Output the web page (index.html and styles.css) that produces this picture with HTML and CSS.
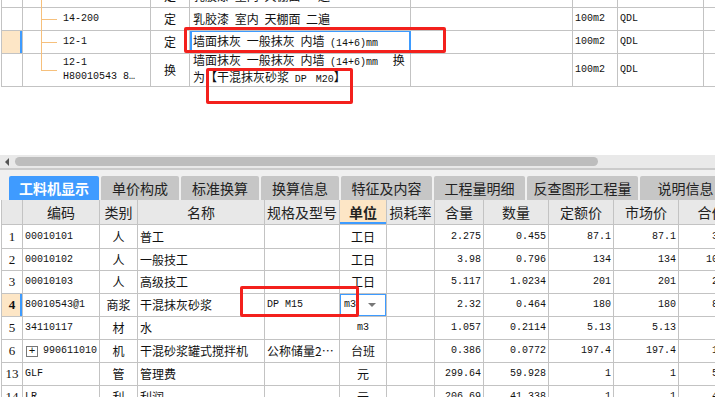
FILE: index.html
```html
<!DOCTYPE html>
<html lang="zh-CN">
<head>
    <meta charset="UTF-8">
    <title>工料机显示</title>
    <link rel="stylesheet" href="styles.css">
</head>
<body>
    <div class="upper">
        <div class="grid top-grid">
            <!-- row cut off at the top -->
            <div></div>
            <div class="code tree"></div>
            <div class="ctr">定</div>
            <div class="desc"><span>乳胶漆 室内 天棚面 一遍</span></div>
            <div></div>
            <div class="m">100m2</div>
            <div class="m">QDL</div>
            <div></div>

            <div></div>
            <div class="code tree"><span class="m">14-200</span></div>
            <div class="ctr">定</div>
            <div class="desc"><span>乳胶漆 室内 天棚面 二遍</span></div>
            <div></div>
            <div class="m">100m2</div>
            <div class="m">QDL</div>
            <div></div>

            <div class="rowsel"></div>
            <div class="code tree"><span class="m">12-1</span></div>
            <div class="ctr">定</div>
            <div class="desc editing"><span>墙面抹灰 一般抹灰 内墙 <span class="m">(14+6)mm</span></span></div>
            <div></div>
            <div class="m">100m2</div>
            <div class="m">QDL</div>
            <div></div>

            <div></div>
            <div class="code tree last"><span class="m">12-1<br>H80010543 8…</span></div>
            <div class="ctr">换</div>
            <div class="desc"><span>墙面抹灰 一般抹灰 内墙 <span class="m">(14+6)mm&nbsp;</span> 换<br>为【干混抹灰砂浆 <span class="m">DP M20</span>】</span></div>
            <div></div>
            <div class="m">100m2</div>
            <div class="m">QDL</div>
            <div></div>
        </div>
    </div>

    <div class="hscroll">
        <span class="arrow-left"></span>
        <span class="thumb"></span>
    </div>

    <div class="tabs">
        <div class="tab active">工料机显示</div>
        <div class="tab w78">单价构成</div>
        <div class="tab w78">标准换算</div>
        <div class="tab w78">换算信息</div>
        <div class="tab w91">特征及内容</div>
        <div class="tab w91">工程量明细</div>
        <div class="tab w111">反查图形工程量</div>
        <div class="tab w91">说明信息</div>
    </div>

    <div class="lower">
        <div class="grid low-grid">
            <div class="hd"></div>
            <div class="hd">编码</div>
            <div class="hd">类别</div>
            <div class="hd">名称</div>
            <div class="hd">规格及型号</div>
            <div class="hd sel">单位</div>
            <div class="hd">损耗率</div>
            <div class="hd">含量</div>
            <div class="hd">数量</div>
            <div class="hd">定额价</div>
            <div class="hd">市场价</div>
            <div class="hd">合价</div>

            <div class="no">1</div><div class="m">00010101</div><div class="ctr">人</div><div>普工</div><div></div><div class="ctr">工日</div><div></div>
            <div class="m r">2.275</div><div class="m r">0.455</div><div class="m r">87.1</div><div class="m r">87.1</div><div class="m r">39.63</div>

            <div class="no">2</div><div class="m">00010102</div><div class="ctr">人</div><div>一般技工</div><div></div><div class="ctr">工日</div><div></div>
            <div class="m r">3.98</div><div class="m r">0.796</div><div class="m r">134</div><div class="m r">134</div><div class="m r">106.66</div>

            <div class="no">3</div><div class="m">00010103</div><div class="ctr">人</div><div>高级技工</div><div></div><div class="ctr">工日</div><div></div>
            <div class="m r">5.117</div><div class="m r">1.0234</div><div class="m r">201</div><div class="m r">201</div><div class="m r">205.7</div>

            <div class="no rowsel">4</div><div class="m">80010543@1</div><div class="ctr">商浆</div><div>干混抹灰砂浆</div><div class="m">DP M15</div>
            <div class="m edit">m3<span class="dd"></span></div><div></div>
            <div class="m r">2.32</div><div class="m r">0.464</div><div class="m r">180</div><div class="m r">180</div><div class="m r">83.52</div>

            <div class="no">5</div><div class="m">34110117</div><div class="ctr">材</div><div>水</div><div></div><div class="m ctr">m3</div><div></div>
            <div class="m r">1.057</div><div class="m r">0.2114</div><div class="m r">5.13</div><div class="m r">5.13</div><div class="m r">1.08</div>

            <div class="no">6</div><div class="m"><span class="expand">+</span>990611010</div><div class="ctr">机</div><div>干混砂浆罐式搅拌机</div><div>公称储量2…</div><div class="ctr">台班</div><div></div>
            <div class="m r">0.386</div><div class="m r">0.0772</div><div class="m r">197.4</div><div class="m r">197.4</div><div class="m r">15.24</div>

            <div class="no">13</div><div class="m">GLF</div><div class="ctr">管</div><div>管理费</div><div></div><div class="ctr">元</div><div></div>
            <div class="m r">299.64</div><div class="m r">59.928</div><div class="m r">1</div><div class="m r">1</div><div class="m r">59.93</div>

            <div class="no">14</div><div class="m">LR</div><div class="ctr">利</div><div>利润</div><div></div><div class="ctr">元</div><div></div>
            <div class="m r">206.69</div><div class="m r">41.338</div><div class="m r">1</div><div class="m r">1</div><div class="m r">41.34</div>
        </div>
    </div>

    <!-- red annotation boxes -->
    <div class="mark mark-1"></div>
    <div class="mark mark-2"></div>
    <div class="mark mark-3"></div>
</body>
</html>
```

FILE: styles.css
```css
body {
    margin: 0;
    width: 715px;
    height: 397px;
    overflow: hidden;
    position: relative;
    background: #fff;
    color: #111;
    font-family: "Noto Sans CJK SC", sans-serif;
    font-size: 12px;
}

/* shared grid look */
.grid {
    display: grid;
    margin-left: 1px;
    border-left: 1px solid #c3c3c3;
}
.grid > div {
    box-sizing: border-box;
    display: flex;
    align-items: center;
    border-right: 1px solid #c3c3c3;
    border-bottom: 1px solid #c3c3c3;
    padding: 0 2px;
    line-height: 14px;
    white-space: nowrap;
    overflow: hidden;
}
.grid > .ctr {
    justify-content: center;
}
.grid > .r {
    justify-content: flex-end;
}
.m {
    font-family: "Liberation Mono", monospace;
    font-size: 10px;
}

/* upper table */
.upper {
    height: 155px;
    overflow: hidden;
}
.top-grid {
    margin-top: -15px;
    grid-template-columns: 21px 128px 39px 221px 162px 45px 86px 50px;
    grid-template-rows: 23px 23px 23px 33px;
}
.top-grid > .code {
    position: relative;
    padding-left: 40px;
    overflow: visible;
}
.tree::before {
    content: "";
    position: absolute;
    left: 18px;
    top: -1px;
    bottom: -1px;
    border-left: 1px solid #f6c07c;
}
.tree::after {
    content: "";
    position: absolute;
    left: 18px;
    top: 11px;
    width: 16px;
    border-top: 1px solid #f6c07c;
}
.tree.last::before {
    bottom: auto;
    height: 17px;
}
.tree.last::after {
    top: 16px;
}
.desc {
    word-spacing: 3px;
}
.top-grid > .desc {
    padding-left: 3px;
}
.top-grid > .editing {
    box-shadow: inset 2px 0 0 #3d9bff, inset 0 0 0 1px #3d9bff;
    border-right-color: #3d9bff;
}
.rowsel {
    background: #fde6c6;
    box-shadow: inset -2px 0 0 #3d9bff;
}

/* horizontal scroll bar */
.hscroll {
    height: 13px;
    background: #e9e9e9;
    border-bottom: 2px solid #cbcbcb;
    display: flex;
    align-items: center;
    padding-left: 5px;
}
.arrow-left {
    width: 0;
    height: 0;
    border-top: 4px solid transparent;
    border-bottom: 4px solid transparent;
    border-right: 4px solid #555;
}
.thumb {
    margin-left: 6px;
    width: 583px;
    height: 9px;
    border-radius: 5px;
    background: #bdbdbd;
}

/* tabs */
.tabs {
    height: 30px;
    box-sizing: border-box;
    padding: 6px 0 0 9px;
    background: #f0f0f0;
    display: flex;
    gap: 2px;
    overflow: hidden;
}
.tab {
    flex: none;
    width: 90px;
    height: 24px;
    border-radius: 2px 2px 0 0;
    background: #c6c6c6;
    color: #222;
    font-size: 14px;
    line-height: 24px;
    text-align: center;
}
.tab.active {
    background: #3f9bff;
    color: #fff;
    font-weight: bold;
}
.w78 { width: 78px; }
.w91 { width: 91px; }
.w111 { width: 111px; }

/* lower table */
.lower {
    height: 197px;
    overflow: hidden;
}
.low-grid {
    width: 746px;
    grid-template-columns: 21px 77px 38px 127px 75px 47px 48px 49px 65px 65px 65px 66px;
    grid-template-rows: 25px 24px 22px 23px 23px 23px 23px 23px 23px;
}
.low-grid > .hd {
    justify-content: center;
    background: #e8e8e8;
    color: #222;
    font-size: 14px;
}
.low-grid > .hd.sel {
    background: #fde6c6;
    font-weight: bold;
    box-shadow: inset 0 -2px 0 #3d9bff;
}
.low-grid > .no {
    justify-content: center;
    padding: 0;
    font-family: "Liberation Serif", serif;
    font-size: 13px;
}
.low-grid > .no.rowsel {
    font-weight: bold;
}
.low-grid > .edit {
    justify-content: space-between;
    padding: 0 10px 0 4px;
    box-shadow: inset 0 0 0 1px #3d9bff;
}
.dd {
    width: 0;
    height: 0;
    border-left: 4px solid transparent;
    border-right: 4px solid transparent;
    border-top: 4px solid #777;
}
.expand {
    display: inline-block;
    box-sizing: border-box;
    width: 12px;
    height: 11px;
    margin: 0 5px 0 1px;
    border: 1px solid #777;
    line-height: 9px;
    text-align: center;
    font-size: 11px;
}

/* red markers drawn over the screenshot */
.mark {
    position: absolute;
    box-sizing: border-box;
    border: 3px solid #f3201c;
    border-radius: 2px;
}
.mark-1 {
    left: 184px;
    top: 27px;
    width: 262px;
    height: 26px;
}
.mark-2 {
    left: 206px;
    top: 68px;
    width: 147px;
    height: 36px;
}
.mark-3 {
    left: 240px;
    top: 286px;
    width: 119px;
    height: 31px;
}
```
